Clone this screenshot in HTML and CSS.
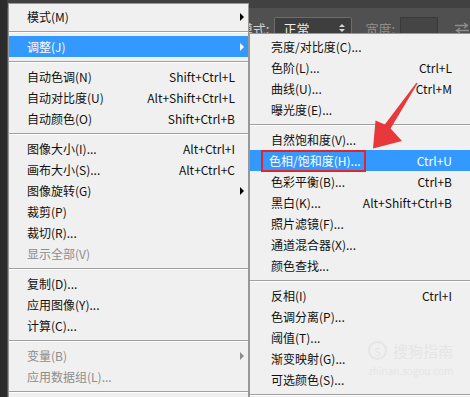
FILE: index.html
```html
<!DOCTYPE html>
<html lang="zh-CN">

<head>
  <meta charset="UTF-8" />
  <meta name="viewport" content="width=device-width, initial-scale=1.0" />
  <title>图像 - 调整</title>
  <link rel="stylesheet" href="styles.css">
</head>

<body>
  <div class="app">
    <div class="sidebar"></div>
    <div class="workspace">
      <!-- 选项栏 -->
      <div class="optbar">
        <span class="opt-label">模式:</span>
        <div class="select">
          <span>正常</span>
          <svg width="6" height="10" viewBox="0 0 6 10"><path d="M0 4 L3 1 L6 4 Z M0 6 L3 9 L6 6 Z" fill="#d8d8d8"/></svg>
        </div>
        <span class="opt-label dim">宽度:</span>
        <div class="field"></div>
        <svg class="swap" width="16" height="12" viewBox="0 0 16 12"><path d="M1 3.5 H13 M10 1 L13.5 3.5 L10 6 M15 8.5 H3 M6 6 L2.5 8.5 L6 11" fill="none" stroke="#8c8c8c" stroke-width="1.4"/></svg>
      </div>
    </div>

    <!-- 图像菜单 -->
    <ul class="menu menu-main">
      <li class="item"><span class="label">模式(M)</span><span class="arr"><i></i></span></li>
      <li class="sep"></li>
      <li class="item active"><span class="label">调整(J)</span><span class="arr"><i></i></span></li>
      <li class="sep"></li>
      <li class="item"><span class="label">自动色调(N)</span><span class="key">Shift+Ctrl+L</span><span class="arr"></span></li>
      <li class="item"><span class="label">自动对比度(U)</span><span class="key">Alt+Shift+Ctrl+L</span><span class="arr"></span></li>
      <li class="item"><span class="label">自动颜色(O)</span><span class="key">Shift+Ctrl+B</span><span class="arr"></span></li>
      <li class="sep"></li>
      <li class="item"><span class="label">图像大小(I)...</span><span class="key">Alt+Ctrl+I</span><span class="arr"></span></li>
      <li class="item"><span class="label">画布大小(S)...</span><span class="key">Alt+Ctrl+C</span><span class="arr"></span></li>
      <li class="item"><span class="label">图像旋转(G)</span><span class="arr"><i></i></span></li>
      <li class="item"><span class="label">裁剪(P)</span><span class="arr"></span></li>
      <li class="item"><span class="label">裁切(R)...</span><span class="arr"></span></li>
      <li class="item disabled"><span class="label">显示全部(V)</span><span class="arr"></span></li>
      <li class="sep"></li>
      <li class="item"><span class="label">复制(D)...</span><span class="arr"></span></li>
      <li class="item"><span class="label">应用图像(Y)...</span><span class="arr"></span></li>
      <li class="item"><span class="label">计算(C)...</span><span class="arr"></span></li>
      <li class="sep"></li>
      <li class="item disabled"><span class="label">变量(B)</span><span class="arr"><i></i></span></li>
      <li class="item disabled"><span class="label">应用数据组(L)...</span><span class="arr"></span></li>
      <li class="sep"></li>
    </ul>

    <!-- 调整子菜单 -->
    <ul class="menu menu-sub">
      <li class="item"><span class="label">亮度/对比度(C)...</span></li>
      <li class="item"><span class="label">色阶(L)...</span><span class="key">Ctrl+L</span></li>
      <li class="item"><span class="label">曲线(U)...</span><span class="key">Ctrl+M</span></li>
      <li class="item"><span class="label">曝光度(E)...</span></li>
      <li class="sep"></li>
      <li class="item"><span class="label">自然饱和度(V)...</span></li>
      <li class="item active"><span class="label mark">色相/饱和度(H)...</span><span class="key">Ctrl+U</span></li>
      <li class="item"><span class="label">色彩平衡(B)...</span><span class="key">Ctrl+B</span></li>
      <li class="item"><span class="label">黑白(K)...</span><span class="key">Alt+Shift+Ctrl+B</span></li>
      <li class="item"><span class="label">照片滤镜(F)...</span></li>
      <li class="item"><span class="label">通道混合器(X)...</span></li>
      <li class="item"><span class="label">颜色查找...</span></li>
      <li class="sep"></li>
      <li class="item"><span class="label">反相(I)</span><span class="key">Ctrl+I</span></li>
      <li class="item"><span class="label">色调分离(P)...</span></li>
      <li class="item"><span class="label">阈值(T)...</span></li>
      <li class="item"><span class="label">渐变映射(G)...</span></li>
      <li class="item"><span class="label">可选颜色(S)...</span></li>
      <li class="sep"></li>
    </ul>

    <div class="watermark">
      <div class="wm-title"><span class="wm-logo">S</span>搜狗指南</div>
      <div class="wm-url">zhinan.sogou.com</div>
    </div>

    <!-- 红色箭头标注 -->
    <svg class="pointer" width="470" height="397" viewBox="0 0 470 397">
      <polygon points="417.6,83.3 390.6,128.4 402,141 373,148.5 375.5,120.5 384.8,124.6 416.4,82.7" fill="#e8383b"/>
    </svg>
  </div>
</body>

</html>
```

FILE: styles.css
```css
body {
  margin: 0;
  padding: 0;
  font-family: "Noto Sans CJK SC", "Noto Sans", sans-serif;
  font-size: 12px;
  background: #535353;
}

.app {
  position: relative;
  display: flex;
  width: 470px;
  height: 397px;
  overflow: hidden;
}

.sidebar {
  width: 8px;
  background: #2c2c2c;
}

.workspace {
  flex: 1;
  background: #535353;
}

.optbar {
  display: flex;
  align-items: center;
  height: 40px;
  padding-left: 233px;
  padding-top: 8px;
  box-sizing: border-box;
  background: #505050;
  border-top: 8px solid #414141;
  color: #d0d0d0;
  font-size: 13px;
  white-space: nowrap;
}

.optbar > * {
  flex-shrink: 0;
}

.opt-label {
  margin-right: 5px;
}

.opt-label.dim {
  color: #8e8e8e;
  margin-left: 13px;
}

.select {
  display: flex;
  align-items: center;
  justify-content: space-between;
  width: 78px;
  height: 22px;
  padding: 0 6px 0 8px;
  box-sizing: border-box;
  background: #3e3e3e;
  border: 1px solid #6c6c6c;
  border-radius: 2px;
  color: #eeeeee;
}

.field {
  width: 38px;
  height: 22px;
  background: #454545;
  border: 1px solid #3a3a3a;
  box-sizing: border-box;
}

.swap {
  margin-left: 16px;
}

.menu {
  position: absolute;
  margin: 0;
  padding: 2px 0 0;
  list-style: none;
  background: #f0f0f0;
  border: 1px solid #979797;
  box-sizing: border-box;
  color: #111;
}

.menu-main {
  left: 8px;
  top: 3px;
  width: 241px;
  height: 400px;
}

.menu-sub {
  left: 249px;
  top: 33px;
  width: 228px;
  height: 370px;
}

.item {
  display: flex;
  align-items: center;
  height: 21px;
  white-space: nowrap;
}

.menu-main .item {
  padding-left: 18px;
}

.menu-sub .item {
  padding-left: 21px;
  padding-right: 24px;
}

.item .label {
  flex: 1;
}

.item.active {
  background: #3399ff;
  color: #fff;
}

.item.disabled {
  color: #8d8d8d;
}

.arr {
  width: 13px;
  height: 21px;
  display: flex;
  align-items: center;
}

.arr i {
  margin-left: 5px;
  border-left: 4px solid #000;
  border-top: 4px solid transparent;
  border-bottom: 4px solid transparent;
}

.active .arr i {
  border-left-color: #fff;
}

.disabled .arr i {
  border-left-color: #8d8d8d;
}

.sep {
  height: 1px;
  margin: 4px 0 3px;
  background: #a0a0a0;
  border-bottom: 1px solid #ffffff;
}

.item .label.mark {
  flex: none;
  margin-left: -10px;
  margin-right: auto;
  padding: 0 3px 0 6px;
  line-height: 18px;
  border: 2px solid #e0262b;
}

.watermark {
  position: absolute;
  left: 368px;
  top: 340px;
  color: #e5e5e5;
}

.wm-title {
  display: flex;
  align-items: center;
  font-size: 15px;
}

.wm-logo {
  display: inline-flex;
  align-items: center;
  justify-content: center;
  width: 15px;
  height: 15px;
  margin-right: 6px;
  border: 2px solid #e5e5e5;
  border-radius: 50%;
  font-size: 11px;
}

.wm-url {
  margin-top: 2px;
  font-size: 10px;
}

.pointer {
  position: absolute;
  left: 0;
  top: 0;
  pointer-events: none;
}
```
